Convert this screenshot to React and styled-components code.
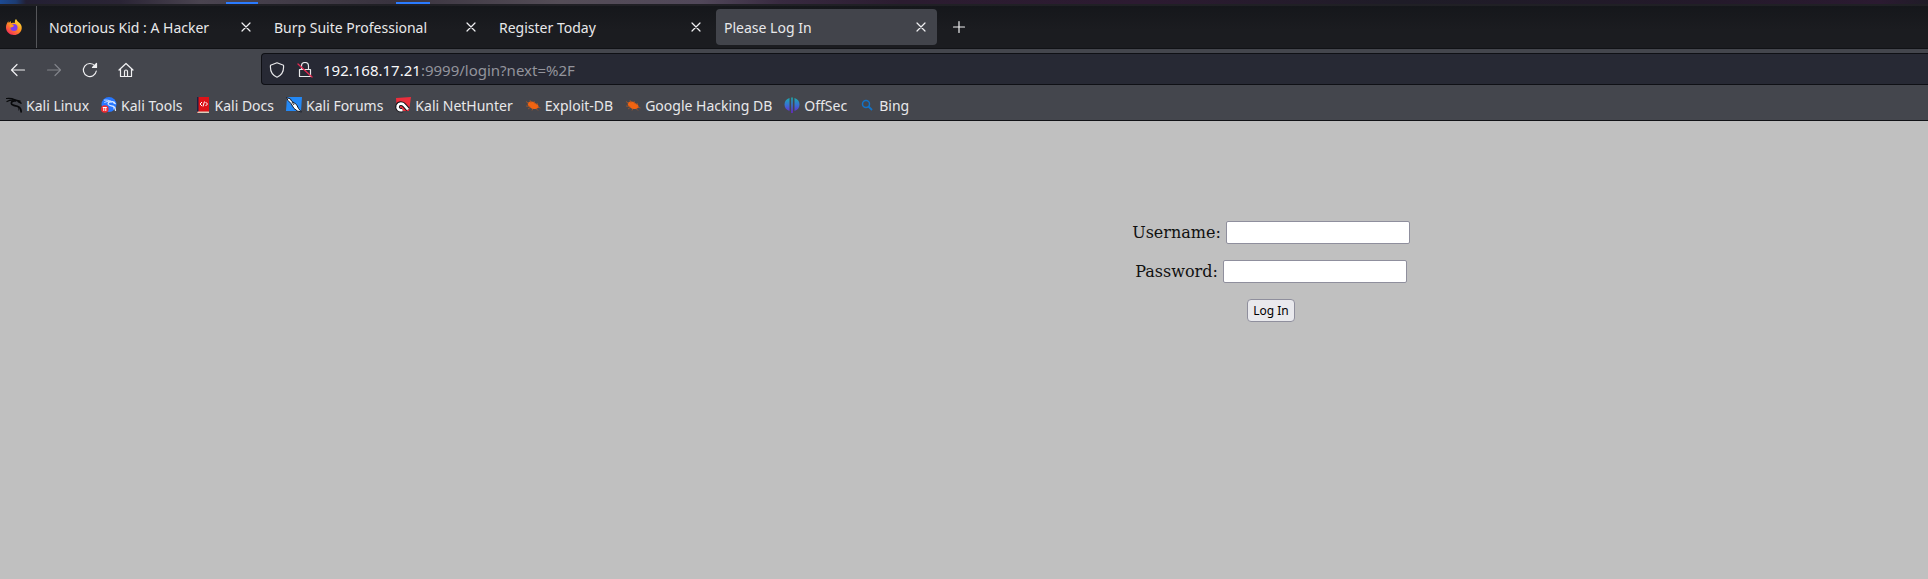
import styled, { createGlobalStyle } from 'styled-components'

const GlobalStyle = createGlobalStyle`
  * {
    box-sizing: border-box;
  }
  body {
    margin: 0;
    background-color: #c0c0c0;
  }
`

const Chrome = styled.header`
  color: #e8e8ea;
  font-family: 'Noto Sans', sans-serif;
  font-size: 14px;
  line-height: 20px;
`

const Desktop = styled.div`
  height: 6px;
  padding-left: 226px;

  display: flex;
  align-items: flex-end;
  gap: 138px;

  background: linear-gradient(90deg, #1c4a94 0, #1d3c72 16px, #231f33 26px, #2a2435 120px, #4a4450 200px, #39333f 390px, #544d57 560px, #51485a 700px, #382a40 780px, #2b1c30 900px, #2c1a31 1150px, #1e1c27 1400px, #23192a 1700px, #2b1a31 1880px, #1f1c27 100%);
  border-bottom: 2px solid #202025;
`

const Workspace = styled.span`
  width: ${(props) => props.width};
  height: 2px;
  background-color: #2a7bff;
`

const TabBar = styled.div`
  height: 43px;

  display: flex;
  align-items: center;

  background: linear-gradient(#15171b, #1b1c20 24px);
  border-bottom: 1px solid #111216;
`

const Pinned = styled.div`
  width: 37px;
  height: 42px;
  margin-right: 2px;
  padding-left: 6px;

  display: flex;
  align-items: center;

  border-right: 1px solid #55565a;
`

const Tab = styled.div`
  width: 221px;
  height: 36px;
  margin: 0 2px;
  padding: 0 8px;

  display: flex;
  align-items: center;
  justify-content: space-between;

  background-color: ${(props) => (props.$active ? '#42444b' : 'transparent')};
  border-radius: 4px;
`

const Caption = styled.span`
  padding-top: 2px;
`

const IconButton = styled.button`
  width: ${(props) => props.width || '16px'};
  height: 24px;
  padding: 0;

  display: flex;
  align-items: center;
  justify-content: center;

  color: ${(props) => (props.disabled ? '#818389' : '#f0f0f2')};
  background: none;
  border: 0;
`

const NewTab = styled(IconButton)`
  margin-left: 12px;
`

const NavBar = styled.nav`
  padding: 4px 0;

  display: flex;
  align-items: center;

  background-color: #44464d;
`

const NavButtons = styled.div`
  width: 261px;
  padding-top: 2px;
  display: flex;
`

const UrlBar = styled.div`
  flex: 1;
  height: 32px;
  padding: 2px 0 0 7px;

  display: flex;
  align-items: center;
  gap: 12px;

  background-color: #272934;
  border: 1px solid #0f1015;
  border-right: 0;
  border-radius: 4px 0 0 4px;
`

const Address = styled.a`
  margin-left: -2px;
  color: #93949c;
  font-size: 15px;
  text-decoration: none;
  b {
    color: #f8f8fa;
    font-weight: 400;
  }
`

const Bookmarks = styled.div`
  height: 32px;
  padding: 0 6px;

  display: flex;
  align-items: center;
  gap: 12px;

  background-color: #44464d;
  border-bottom: 1px solid #111216;
`

const Bookmark = styled.a`
  display: flex;
  align-items: center;
  gap: 4px;

  color: inherit;
  text-decoration: none;
  white-space: nowrap;
`

const Page = styled.main`
  padding: 100px 0 0 614px;
  color: #111;
  font-family: 'DejaVu Serif', serif;
  font-size: 16px;
  line-height: 23px;
`

const LoginForm = styled.form`
  display: flex;
  flex-direction: column;
  align-items: center;
  gap: 16px;
`

const Field = styled.div`
  display: flex;
  gap: 5px;
`

const TextInput = styled.input`
  width: 184px;
  height: 23px;
  background-color: #fff;
  border: 1px solid #8f8f9d;
  border-radius: 2px;
`

const Submit = styled.button`
  width: 48px;
  height: 23px;
  padding: 1px 0 0;
  color: #000;
  background-color: #e9e9ed;
  border: 1px solid #8f8f9d;
  border-radius: 4px;
  font-family: 'Noto Sans', sans-serif;
  font-size: 12px;
  line-height: 20px;
`

const Line = ({ children }) => (
  <svg width='16' height='16' viewBox='0 0 16 16' fill='none' stroke='currentColor' strokeLinecap='round' strokeLinejoin='round' strokeWidth='1.2'>
    {children}
  </svg>
)

const Art = ({ children }) => (
  <svg width='16' height='16' viewBox='0 0 16 16'>
    {children}
  </svg>
)

const FirefoxIcon = () => (
  <Art>
    <defs>
      <linearGradient id='flame' x1='0.9' y1='0' x2='0.2' y2='1'>
        <stop offset='0' stopColor='#fff04a' />
        <stop offset='0.45' stopColor='#ff9a1c' />
        <stop offset='1' stopColor='#f5245c' />
      </linearGradient>
    </defs>
    <path d='M10 0c1 1.500 1.500 2.500 3 3.500 2 1.500 3 3.500 2.700 6C15.200 13.500 12 16 8 16 3.500 16 0 12.800 0 8.500 0 6 .8 4 2.300 2.200l.5 1.800L4.500 2l.6 2.200C6.500 3.600 8 3.600 9 4 8.600 2.500 9 1 10 0z' fill='url(#flame)' />
    <circle cx='8' cy='8.500' r='3.500' fill='#7a3cf0' />
    <path d='M3.500 6c1.500-1 3.500-.7 4.500.7-.5 1-1.500 1-2 1.600l-2 .2z' fill='#ff9a1c' />
  </Art>
)

const CloseIcon = () => (
  <Line>
    <path d='M4 4l8 8M12 4l-8 8' />
  </Line>
)

const Dragon = ({ color, transform }) => (
  <g stroke={color} fill='none' strokeLinecap='round' strokeLinejoin='round' transform={transform}>
    <path d='M.5 1.500c3-.3 6 0 8.500 1.300M1 4.500c2-1 4-1.500 6-1.300' strokeWidth='1.200' />
    <path d='M9 3c1.500 0 2.800.6 3.500 1.800l2.500 1.400M11 3.500l3 .7' strokeWidth='1.500' />
    <path d='M9.500 4C6.500 3.500 5 5 5.500 6.800c.7 2.200 4.500 1.800 7 2.900 2 1 2.700 2.700 2.600 5.300' strokeWidth='1.700' />
    <path d='M12 10c1 1.200 1 2 .8 3' strokeWidth='1' />
  </g>
)

const KaliIcon = () => (
  <Art>
    <Dragon color='#08090b' />
  </Art>
)

const ToolsIcon = () => (
  <Art>
    <circle cx='8' cy='7.500' r='7.500' fill='#2777ff' />
    <Dragon color='#dceaff' transform='translate(3 2) scale(.76)' />
    <circle cx='3.800' cy='12' r='3.800' fill='#ed2b31' />
    <path d='M1.800 10.500h4M2.800 10.500v3.500M4.800 10.500v3.500' stroke='#fff' fill='none' />
  </Art>
)

const DocsIcon = () => (
  <Art>
    <path d='M2 0h12v16H2z' fill='#dd1218' />
    <path d='M2 0h1.500v15H2z' fill='#1b2142' />
    <path d='M2.500 14.500H14V16H2.500z' fill='#dbcdb9' />
    <path d='M7 5L5 7l2 2M10.500 5l2 2-2 2M9.500 4.500l-1.500 5' stroke='#fff' fill='none' />
  </Art>
)

const ForumsIcon = () => (
  <Art>
    <path d='M1 0h15l-1 14H0z' fill='#2388f5' />
    <path d='M.5.500l4 1.500 1 2 5 3.500 2 4 3 3.500-4-1-3.500-2.500-3-5-3-3z' fill='#fff' stroke='#161b26' strokeWidth='1' />
    <path d='M6 5l2 3' stroke='#252a34' />
  </Art>
)

const NetHunterIcon = () => (
  <Art>
    <path d='M1 1l15-1-2 14H2z' fill='#ec2e3c' />
    <path d='M13 12.500L9.500 8.500C7.500 6 4 6 2.800 8.500 1.800 11.500 4 14 7.500 13' fill='none' stroke='#15151a' strokeWidth='4.600' />
    <path d='M13 12.500L9.500 8.500C7.500 6 4 6 2.800 8.500 1.800 11.500 4 14 7.500 13' fill='none' stroke='#fff' strokeWidth='2.600' />
  </Art>
)

const BugIcon = () => (
  <Art>
    <path d='M3 6c2-2 4.500-1.800 6.500-.3l3.500 2 .8 2.800L11 12c-2.500.2-4.800-.2-6-1.800C3.500 9 2 7.500 3 6z' fill='#f26411' />
    <path d='M1 4.500l3 2M5 3l1 3M1 9l4 .5M3 12l3-2M9 4l1 3M13 6.500l-2 1M15.500 11l-3-1M13 13.500l-2-2M7 13.500l1-2' stroke='#b8581f' strokeWidth='.7' />
  </Art>
)

const OffSecIcon = () => (
  <Art>
    <defs>
      <linearGradient id='offsec' x1='0' y1='0' x2='0' y2='16' gradientUnits='userSpaceOnUse'>
        <stop offset='0' stopColor='#16b3ac' />
        <stop offset='0.5' stopColor='#3871d3' />
        <stop offset='1' stopColor='#6a22d0' />
      </linearGradient>
    </defs>
    <path d='M5.500 1v13C2.500 13 .5 11 .5 7.500S2.500 2 5.500 1zM7.200.5h1.600V16H7.200zM10.500 1v13c3-1 5-3 5-6.500S13.500 2 10.500 1z' fill='url(#offsec)' />
  </Art>
)

const BingIcon = () => (
  <Art>
    <circle cx='7' cy='7' r='3.500' fill='none' stroke='#1273c8' strokeWidth='1.500' />
    <path d='M9.500 9.500L13 13' stroke='#1273c8' strokeWidth='1.800' />
  </Art>
)

const tabs = ['Notorious Kid : A Hacker', 'Burp Suite Professional', 'Register Today', 'Please Log In']

const bookmarks = [
  { title: 'Kali Linux', Icon: KaliIcon },
  { title: 'Kali Tools', Icon: ToolsIcon },
  { title: 'Kali Docs', Icon: DocsIcon },
  { title: 'Kali Forums', Icon: ForumsIcon },
  { title: 'Kali NetHunter', Icon: NetHunterIcon },
  { title: 'Exploit-DB', Icon: BugIcon },
  { title: 'Google Hacking DB', Icon: BugIcon },
  { title: 'OffSec', Icon: OffSecIcon },
  { title: 'Bing', Icon: BingIcon },
]

const App = () => {
  return (
    <>
      <GlobalStyle />
      <Chrome>
        <Desktop>
          <Workspace width='32px' />
          <Workspace width='34px' />
        </Desktop>
        <TabBar>
          <Pinned>
            <FirefoxIcon />
          </Pinned>
          {tabs.map((title, i) => (
            <Tab key={title} $active={i === 3}>
              <Caption>{title}</Caption>
              <IconButton aria-label={`Close ${title}`}>
                <CloseIcon />
              </IconButton>
            </Tab>
          ))}
          <NewTab aria-label='New tab'>
            <Line>
              <path d='M8 2.500v11M2.500 8h11' />
            </Line>
          </NewTab>
        </TabBar>
        <NavBar>
          <NavButtons>
            <IconButton width='36px' aria-label='Back'>
              <Line>
                <path d='M14.500 8h-13M7 2.500L1.500 8 7 13.500' />
              </Line>
            </IconButton>
            <IconButton width='36px' aria-label='Forward' disabled>
              <Line>
                <path d='M1.500 8h13M9 2.500L14.500 8 9 13.500' />
              </Line>
            </IconButton>
            <IconButton width='36px' aria-label='Reload'>
              <Line>
                <path d='M13 4A6.500 6.500 0 1 0 14.300 9' />
                <path d='M14.500 1.500V5.500h-4z' fill='currentColor' />
              </Line>
            </IconButton>
            <IconButton width='36px' aria-label='Home'>
              <Line>
                <path d='M1 8l7-6.500L15 8M2.500 7v7.500h11V7M6.500 14V9.500a1.500 1.500 0 0 1 3 0V14' />
              </Line>
            </IconButton>
          </NavButtons>
          <UrlBar>
            <Line>
              <path d='M8 .8l6.500 2.400c.5 5-1.500 9.800-6.500 12-5-2.200-7-7-6.500-12z' />
            </Line>
            <Line>
              <path d='M2.500 7.500h11v7h-11zM4.500 7V4a3.500 3.500 0 0 1 7 0v3' />
              <path d='M1 2l14 13' stroke='#e22850' strokeWidth='1.300' />
            </Line>
            <Address href='#'>
              <b>192.168.17.21</b>:9999/login?next=%2F
            </Address>
          </UrlBar>
        </NavBar>
        <Bookmarks>
          {bookmarks.map(({ title, Icon }) => (
            <Bookmark key={title} href='#'>
              <Icon />
              <Caption>{title}</Caption>
            </Bookmark>
          ))}
        </Bookmarks>
      </Chrome>
      <Page>
        <LoginForm>
          <Field>
            <label htmlFor='username'>Username:</label>
            <TextInput id='username' type='text' />
          </Field>
          <Field>
            <label htmlFor='password'>Password:</label>
            <TextInput id='password' type='password' />
          </Field>
          <Submit type='button'>Log In</Submit>
        </LoginForm>
      </Page>
    </>
  )
}

export default App
